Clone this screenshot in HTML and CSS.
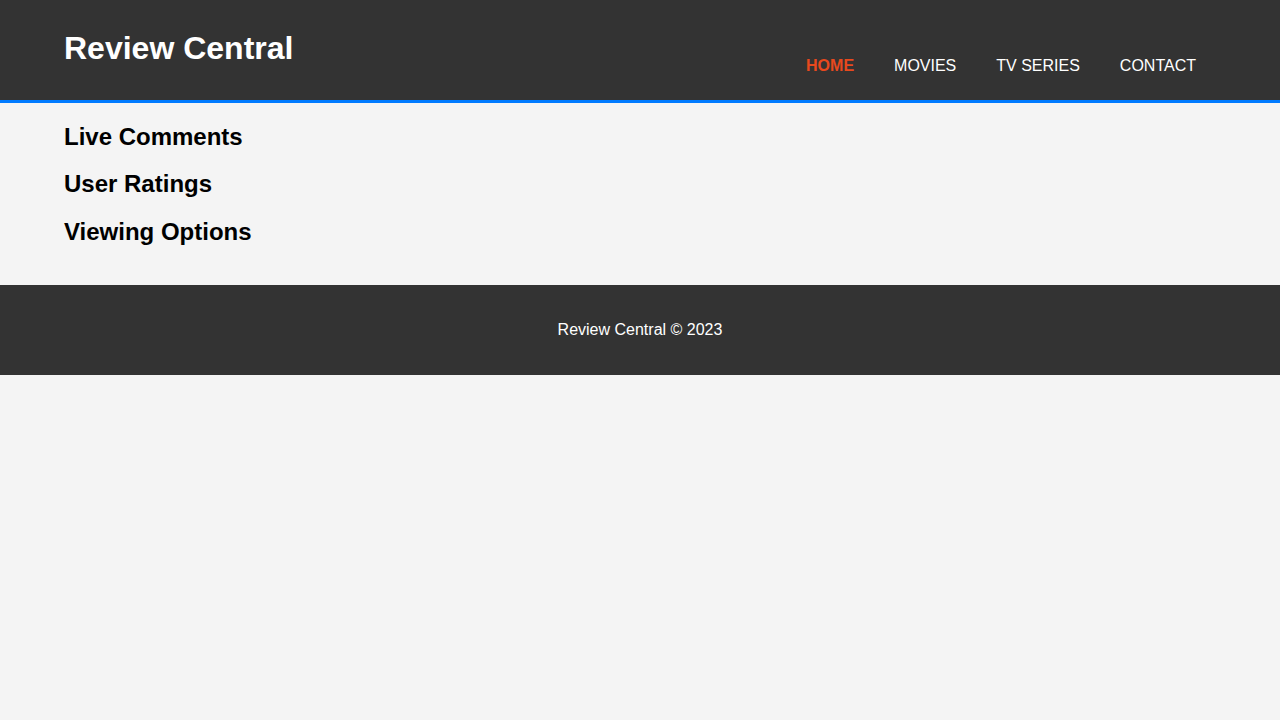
FILE: index.html
```html
<!DOCTYPE html>
<html lang="en">
<head>
<meta charset="utf-8">
<title>Review Central</title>
<link rel="stylesheet" href="styles.css">
</head>
<body>
<header class="site-header">
  <div class="container header-inner">
    <div class="branding"><h1>Review Central</h1></div>
    <nav class="nav">
      <ul class="nav-list">
        <li class="nav-item current"><a href="#">Home</a></li>
        <li class="nav-item"><a href="#">Movies</a></li>
        <li class="nav-item"><a href="#">TV Series</a></li>
        <li class="nav-item"><a href="#">Contact</a></li>
      </ul>
    </nav>
  </div>
</header>
<main class="container main">
  <section><h2>Live Comments</h2></section>
  <section><h2>User Ratings</h2></section>
  <section><h2>Viewing Options</h2></section>
</main>
<footer class="site-footer">
  <p>Review Central &copy; 2023</p>
</footer>
</body>
</html>
```
FILE: styles.css
```css
body {
  margin: 0;
  padding: 0;
  font-family: "Liberation Sans", Arial, sans-serif;
  font-size: 16px;
  background: #f4f4f4;
  color: #000;
}
.container {
  width: 90%;
  margin: 0 auto;
}
.site-header {
  background: #333333;
  color: #fff;
  padding-top: 30px;
  min-height: 70px;
  border-bottom: 3px solid #007bff;
}
.header-inner {
  display: flex;
  justify-content: space-between;
  align-items: flex-start;
}
.branding h1 {
  margin: 0;
  font-size: 32px;
}
.nav {
  margin-top: 11px;
}
.nav-list {
  list-style: none;
  display: flex;
  margin: 16px 0;
  padding: 0;
}
.nav-item {
  padding: 0 20px;
}
.nav-item a {
  color: #fff;
  text-decoration: none;
  text-transform: uppercase;
  font-size: 16px;
}
.nav-item.current a {
  color: #e8491d;
  font-weight: bold;
}
.main {
  display: flow-root;
}
.main h2 {
  font-size: 24px;
  margin: 19.7px 0;
}
.site-footer {
  margin-top: 19px;
  padding: 20px;
  background: #333333;
  color: #fff;
  text-align: center;
}
.site-footer p {
  margin: 16px 0;
}
```
